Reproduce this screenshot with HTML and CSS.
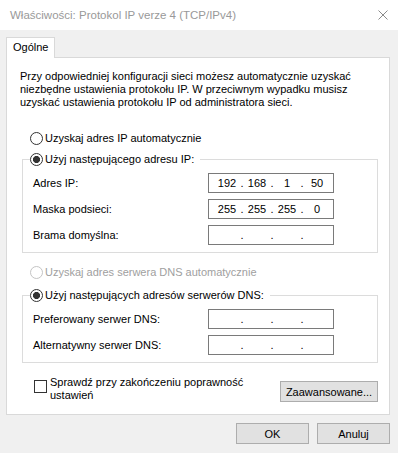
FILE: index.html
```html
<!DOCTYPE html>
<html lang="pl">
<head>
    <meta charset="UTF-8">
    <meta name="viewport" content="width=device-width, initial-scale=1.0">
    <title>Właściwości: Protokol IP verze 4 (TCP/IPv4)</title>
    <link rel="stylesheet" href="styles.css">
</head>
<body>
    <div class="window">
        <div class="titlebar">
            <span class="title">Właściwości: Protokol IP verze 4 (TCP/IPv4)</span>
            <span class="close">
                <svg width="10" height="10" viewBox="0 0 10 10">
                    <path d="M0.5 0.5 L9.5 9.5 M9.5 0.5 L0.5 9.5" stroke="#8a8a8a" stroke-width="1" fill="none"/>
                </svg>
            </span>
        </div>
        <div class="content">
            <div class="tabs">
                <div class="tab">Ogólne</div>
            </div>
            <div class="panel">
                <p class="intro">
                    Przy odpowiedniej konfiguracji sieci możesz automatycznie uzyskać<br>
                    niezbędne ustawienia protokołu IP. W przeciwnym wypadku musisz<br>
                    uzyskać ustawienia protokołu IP od administratora sieci.
                </p>

                <label class="radio radio-auto-ip">
                    <input type="radio" name="ip"> Uzyskaj adres IP automatycznie
                </label>
                <fieldset class="group group-ip">
                    <legend>
                        <label class="radio">
                            <input type="radio" name="ip" checked> Użyj następującego adresu IP:
                        </label>
                    </legend>
                    <div class="rows">
                        <div class="field-row">
                            <span>Adres IP:</span>
                            <div class="ip-box">
                                <span class="octet">192</span><span class="dot">.</span><span class="octet">168</span><span class="dot">.</span><span class="octet">1</span><span class="dot">.</span><span class="octet">50</span>
                            </div>
                        </div>
                        <div class="field-row">
                            <span>Maska podsieci:</span>
                            <div class="ip-box">
                                <span class="octet">255</span><span class="dot">.</span><span class="octet">255</span><span class="dot">.</span><span class="octet">255</span><span class="dot">.</span><span class="octet">0</span>
                            </div>
                        </div>
                        <div class="field-row">
                            <span>Brama domyślna:</span>
                            <div class="ip-box">
                                <span class="octet"></span><span class="dot">.</span><span class="octet"></span><span class="dot">.</span><span class="octet"></span><span class="dot">.</span><span class="octet"></span>
                            </div>
                        </div>
                    </div>
                </fieldset>

                <label class="radio radio-auto-dns disabled">
                    <input type="radio" name="dns" disabled> Uzyskaj adres serwera DNS automatycznie
                </label>
                <fieldset class="group group-dns">
                    <legend>
                        <label class="radio">
                            <input type="radio" name="dns" checked> Użyj następujących adresów serwerów DNS:
                        </label>
                    </legend>
                    <div class="rows">
                        <div class="field-row">
                            <span>Preferowany serwer DNS:</span>
                            <div class="ip-box">
                                <span class="octet"></span><span class="dot">.</span><span class="octet"></span><span class="dot">.</span><span class="octet"></span><span class="dot">.</span><span class="octet"></span>
                            </div>
                        </div>
                        <div class="field-row">
                            <span>Alternatywny serwer DNS:</span>
                            <div class="ip-box">
                                <span class="octet"></span><span class="dot">.</span><span class="octet"></span><span class="dot">.</span><span class="octet"></span><span class="dot">.</span><span class="octet"></span>
                            </div>
                        </div>
                    </div>
                </fieldset>

                <div class="check-row">
                    <label class="check">
                        <input type="checkbox">
                        <span>Sprawdź przy zakończeniu poprawność<br>ustawień</span>
                    </label>
                    <button class="btn btn-advanced">Zaawansowane...</button>
                </div>
            </div>
            <div class="dialog-buttons">
                <button class="btn btn-dialog">OK</button>
                <button class="btn btn-dialog">Anuluj</button>
            </div>
        </div>
    </div>
</body>
</html>
```

FILE: styles.css
```css
body {
    margin: 0;
    font-family: "Liberation Sans", Arial, sans-serif;
    font-size: 11px;
    color: #000;
    background: #f0f0f0;
}
.window {
    width: 398px;
    height: 453px;
    display: flex;
    flex-direction: column;
}
.titlebar {
    height: 30px;
    background: #ffffff;
    display: flex;
    align-items: center;
    justify-content: space-between;
    padding: 0 10px;
    box-sizing: border-box;
}
.title {
    color: #999;
    font-size: 11.5px;
}
.close {
    display: flex;
    width: 10px;
    height: 10px;
}
.content {
    padding: 7px 8px 0 6px;
}
.tabs {
    display: flex;
}
.tab {
    position: relative; /* sits over the panel's top border */
    background: #ffffff;
    border: 1px solid #d9d9d9;
    border-bottom: none;
    height: 20px;
    line-height: 19px;
    padding: 0 6px 0 6px;
    margin-bottom: -1px;
}
.panel {
    height: 358px;
    box-sizing: border-box;
    background: #ffffff;
    border: 1px solid #d9d9d9;
    padding: 12px 11px 0 13px;
}
.intro {
    margin: 0;
    line-height: 13px;
}
.radio {
    display: flex;
    align-items: center;
    height: 14px;
    white-space: nowrap;
}
.radio input {
    appearance: none;
    -webkit-appearance: none;
    width: 13px;
    height: 13px;
    margin: 0 2px 0 0;
    border: 1px solid #333;
    border-radius: 50%;
    background: #ffffff;
    box-sizing: border-box;
}
.radio input:checked {
    background: radial-gradient(circle, #333 0 3.3px, #ffffff 3.8px);
}
.radio.disabled {
    color: #a0a0a0;
}
.radio.disabled input {
    border-color: #c4c4c4;
}
.radio-auto-ip {
    margin: 22px 0 0 10px;
}
.radio-auto-dns {
    margin: 12px 0 0 10px;
}
.group {
    margin: 7px 0 0 2px;
    padding: 7px 43px 7px 7px;
    border: 1px solid #dcdcdc;
    min-width: 0;
}
.group-dns {
    margin-top: 9px;
}
.group legend {
    padding: 0 6px 0 0;
}
.rows {
    display: flex;
    flex-direction: column;
    gap: 6px;
}
.field-row {
    display: flex;
    align-items: center;
    justify-content: space-between;
    height: 20px;
    padding-left: 3px;
}
.ip-box {
    display: flex;
    align-items: center;
    width: 126px;
    height: 20px;
    box-sizing: border-box;
    border: 1px solid #7a7a7a;
    padding: 0 4px 0 6px;
}
.octet {
    width: 24px;
    text-align: center;
}
.dot {
    width: 6px;
    text-align: center;
}
.check-row {
    display: flex;
    justify-content: space-between;
    align-items: flex-start;
    margin-top: 13px;
}
.check {
    display: flex;
    align-items: flex-start;
    margin-left: 14px;
    line-height: 13px;
}
.check input {
    appearance: none;
    -webkit-appearance: none;
    width: 13px;
    height: 13px;
    margin: 4px 3px 0 0;
    border: 1px solid #333;
    background: #ffffff;
    box-sizing: border-box;
}
.btn {
    font: inherit;
    color: #000;
    background: #e1e1e1;
    border: 1px solid #adadad;
    height: 21px;
    padding: 0;
}
.btn-advanced {
    width: 98px;
    margin-top: 5px;
}
.dialog-buttons {
    display: flex;
    justify-content: flex-end;
    gap: 8px;
    margin-top: 8px;
}
.btn-dialog {
    width: 73px;
}
```
